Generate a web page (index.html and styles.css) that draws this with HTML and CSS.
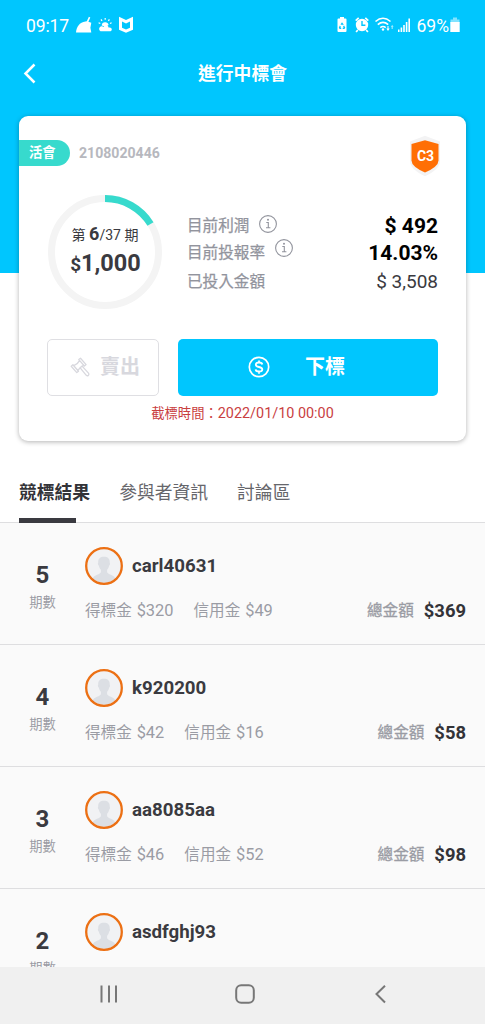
FILE: index.html
```html
<!DOCTYPE html>
<html lang="zh-Hant">
<head>
<meta charset="utf-8">
<meta name="viewport" content="width=device-width">
<title>進行中標會</title>
<link rel="stylesheet" href="styles.css">
</head>
<body>
<svg class="defs" width="0" height="0">
  <symbol id="info" viewBox="0 0 20 20"><circle cx="10" cy="10" r="8.4" fill="none" stroke="currentColor" stroke-width="1.1"/><path d="M8.300 8.500h2v5.200M8 13.800h4.400" fill="none" stroke="currentColor" stroke-width="1.1"/><circle cx="10" cy="5.800" r="1" fill="currentColor"/></symbol>
  <symbol id="avatar" viewBox="0 0 38 38"><circle cx="19" cy="19" r="17.8" fill="#f1f2f4"/><path d="M13.2 16c-.3-4 1.6-6.2 5.8-6.2s6 2.200 5.700 6.200c.6.400.3 2.200-.5 2.600-.4 2-1.100 3.200-2.100 4.200v2.200c0 2.600 7.500 2.500 8.100 6.600a17 17 0 0 1-22.400 0c.6-4.100 8.100-4 8.100-6.600v-2.200c-1-1-1.700-2.200-2.100-4.200-.9-.4-1.200-2.200-.6-2.600z" fill="#dcdfe4"/><circle cx="19" cy="19" r="17.800" fill="none" stroke="#ec7014" stroke-width="2.300"/></symbol>
</svg>
<div class="screen">
  <header class="hero">
    <div class="status">
      <span class="clock">09:17</span>
      <svg class="st-left" width="60" height="18" viewBox="0 0 60 18" fill="#fff">
        <path d="M0 16.500C.5 11 3.500 6 9.500 5.500l1.300-.2 2.100-4.500 1.400.7-1.900 4.200 2.900 1-.9 5.100.9 4.700z"/>
        <g transform="translate(22 2)"><path d="M2.500 13.200a2.600 2.600 0 0 1-.2-4.500c1.500-.8 2.500-.5 3.200.2 1.500-2.200 4.900-1.500 5.200.8 1.800-.5 3.100.6 3.100 1.700 0 1.100-.8 1.800-2 1.800z"/><path d="M3.700 7.400a3.500 3.500 0 0 1 6.900-.4l-1.400 1-3 .2z"/><path d="M7.200 0v1.800M3 1.300l1 1.500M11.400 1.300l-1 1.500M.6 4.800l1.700.7M13.600 4.800l-1.600.7" stroke="#fff" stroke-width="1.200"/></g>
        <path d="M43 .7l7 3.300 7-3.300v13l-7 3-7-3zm3 4.800v6.300l4 1.700 4-1.700V5.500l-4 2z" fill-rule="evenodd"/>
      </svg>
      <svg class="st-right" width="76" height="18" viewBox="0 0 76 18" fill="#fff">
        <path fill-rule="evenodd" d="M4 1h4v1.500h1.500q1 0 1 1V15q0 1-1 1h-7q-1 0-1-1V3.500q0-1 1-1H4zm2 5.200L4.500 8.500l1 .6.500-.8.700 1 1-.7zM3.800 9.500l-1 2.200.9 1.300h1.500v-1.300H4.400l.5-.9zm4.300 0-1 .7.500 1.500h-.9V13h1.700l.9-1.300z"/>
        <circle cx="26" cy="9" r="6.200"/><path d="M19.700 4.600l3-2.700M32.300 4.600l-3-2.700M21.800 14l-1.700 2M30.200 14l1.700 2" stroke="#fff" stroke-width="1.700"/><path d="M26 5v4.300h3.400" fill="none" stroke="#00c6fe" stroke-width="1.400"/>
        <path d="M39.500 5.500q7.500-6.500 15 0M41.800 8.700q5.200-4.500 10.400 0M44.300 11.600q2.700-2.200 5.400 0" fill="none" stroke="#fff" stroke-width="1.600"/><circle cx="47" cy="13.500" r="1.200"/><path d="M50.300 12.600h1.200V10h1v2.600h1.200l-1.700 2.500z"/><path opacity=".6" d="M54.800 11l1.400-2.200 1.400 2.200h-.8v2h-1.200v-2z"/>
        <path d="M62 13.500h1.500V16H62zM64.600 11.500h1.600V16h-1.600zM67.200 9h1.600v7h-1.600zM69.800 6h1.600v10h-1.600zM72.400 2.500H74V16h-1.600z"/>
      </svg>
      <span class="percent">69%</span>
      <svg width="10" height="16" viewBox="0 0 10 16" fill="#fff"><path d="M3 .5h4v2h2.500v3h-9v-3H3z" opacity=".5"/><path d="M.3 5h9.400v10H.3z"/></svg>
    </div>
    <div class="appbar">
      <svg class="back" width="14" height="22" viewBox="0 0 14 22"><path d="M11.500 1.500 2.500 10.500l9 9" fill="none" stroke="#fff" stroke-width="2.500"/></svg>
      <h1>進行中標會</h1>
    </div>
    <section class="card">
      <div class="card-top">
        <span class="tag">活會</span><span class="serial">2108020446</span>
        <svg class="shield" width="34" height="42" viewBox="0 0 34 42"><path d="M17 .8 32 6.500v19q0 9-15 15.700Q2 34.500 2 25.500v-19z" fill="#f3f3f4"/><path d="M17 5.200 30.500 9v16.500q0 6-13.500 12.100Q3.500 31.500 3.500 25.500V9z" fill="#ff6f05"/><text x="17.500" y="26" text-anchor="middle" class="grade">C3</text></svg>
      </div>
      <div class="summary">
        <div class="ring">
          <svg class="dial" width="114" height="114" viewBox="0 0 114 114"><circle cx="57" cy="57" r="53.500" fill="none" stroke="#f4f4f4" stroke-width="7"/><path d="M57 3.500A53.500 53.500 0 0 1 102.500 29" fill="none" stroke="#37dacd" stroke-width="7"/></svg>
          <div class="ring-text"><div class="period">第 <b>6</b>/37 期</div><div class="amount"><small>$</small>1,000</div></div>
        </div>
        <dl class="stats">
          <div class="stat"><dt>目前利潤<svg class="info"><use href="#info"/></svg></dt><dd>$ 492</dd></div>
          <div class="stat"><dt>目前投報率<svg class="info raised"><use href="#info"/></svg></dt><dd>14.03%</dd></div>
          <div class="stat last"><dt>已投入金額</dt><dd class="plain">$ 3,508</dd></div>
        </dl>
      </div>
      <div class="actions">
        <button class="btn sell"><svg width="20" height="21" viewBox="0 0 20 21" fill="none" stroke="currentColor" stroke-width="1.300" stroke-linejoin="round"><path d="m1.200 9.200 1.700-1.400 5.600 6.400-1.700 1.400zM8.800 2.600l1.700-1.400 5.600 6.400-1.700 1.400zM3.800 8.600q4-1.500 5.700-5M8 13.300q2.300-3.600 5.700-5M10.200 10.800l1.900-1.700 6.600 7.300q.5 1.200-.4 2-1 .8-2-.1z"/></svg><span>賣出</span></button>
        <button class="btn bid"><svg width="22" height="22" viewBox="0 0 22 22" fill="none" stroke="currentColor"><circle cx="11" cy="11" r="9.700" stroke-width="1.700"/><path d="M14.300 8.500Q14 6.500 11 6.500T7.800 8.700Q7.800 10.400 11 11t3.300 2.400q0 2.100-3.300 2.100t-3.400-2.100M11 4.400v2.100M11 15.500v2.200" stroke-width="1.800"/></svg><span>下標</span></button>
      </div>
      <p class="deadline">截標時間：<span>2022/01/10 00:00</span></p>
    </section>
  </header>
  <nav class="tabs"><a class="tab active">競標結果</a><a class="tab">參與者資訊</a><a class="tab">討論區</a></nav>
  <main class="list">
    <article class="row"><div class="no"><b>5</b><span>期數</span></div><div class="body"><div class="user"><svg class="avatar"><use href="#avatar"/></svg><span>carl40631</span></div><div class="meta"><span>得標金 <i>$320</i></span><span>信用金 <i>$49</i></span><span class="total">總金額<b>$369</b></span></div></div></article>
    <article class="row"><div class="no"><b>4</b><span>期數</span></div><div class="body"><div class="user"><svg class="avatar"><use href="#avatar"/></svg><span>k920200</span></div><div class="meta"><span>得標金 <i>$42</i></span><span>信用金 <i>$16</i></span><span class="total">總金額<b>$58</b></span></div></div></article>
    <article class="row"><div class="no"><b>3</b><span>期數</span></div><div class="body"><div class="user"><svg class="avatar"><use href="#avatar"/></svg><span>aa8085aa</span></div><div class="meta"><span>得標金 <i>$46</i></span><span>信用金 <i>$52</i></span><span class="total">總金額<b>$98</b></span></div></div></article>
    <article class="row"><div class="no"><b>2</b><span>期數</span></div><div class="body"><div class="user"><svg class="avatar"><use href="#avatar"/></svg><span>asdfghj93</span></div></div></article>
  </main>
  <footer class="sysnav">
    <svg width="20" height="20" viewBox="0 0 20 20"><path d="M2.500 1.500v17M10 1.500v17M17 1.500v17"/></svg>
    <svg width="20" height="20" viewBox="0 0 20 20"><rect x="1.200" y="1.200" width="17.600" height="17.600" rx="5"/></svg>
    <svg width="20" height="20" viewBox="0 0 20 20"><path d="M15 1.800 6.500 10l8.500 8.500"/></svg>
  </footer>
</div>
</body>
</html>
```
FILE: styles.css
```css
* { box-sizing: border-box; }
body { margin: 0; font-family: Roboto, "Noto Sans CJK TC", sans-serif; color: #3a3a40; background: #fff; }
h1, p, dl, dd { margin: 0; }
svg { flex: none; display: block; }
.defs { position: absolute; }
.screen { width: 485px; height: 1024px; display: flex; flex-direction: column; overflow: hidden; }

.hero { flex: none; height: 441px; background: linear-gradient(#00c6fe 273px, #fff 273px); }
.status { height: 50px; padding: 0 25px 0 26px; display: flex; align-items: center; color: #fff; font-size: 17.5px; line-height: 20px; }
.clock { width: 50px; padding-top: 1px; letter-spacing: -.1px; }
.st-right { margin-left: auto; }
.percent { margin: 0 1px 0 5px; padding-top: 1px; }
.appbar { height: 66px; padding: 13px 24px 0 23px; display: grid; grid-template-columns: 15px 1fr 14px; }
h1 { text-align: center; padding-top: 1px; font-size: 17.800px; line-height: 20px; color: #fff; font-weight: 700; }

.card { width: 447px; height: 325px; margin: 0 auto 0 19px; background: #fff; border-radius: 9px; box-shadow: 0 1px 5px rgba(0,0,0,.3); }
.card-top { height: 79px; padding: 0 24px 0 0; display: flex; }
.tag { margin-top: 23.500px; width: 51px; height: 26px; border-radius: 0 13px 13px 0; background: #37dacd; color: #fff; font-weight: 700; font-size: 13.300px; line-height: 26px; padding-left: 10px; }
.serial { margin: 24px 0 0 9px; color: #b7b8be; font-weight: 700; font-size: 14.100px; line-height: 27px; }
.shield { margin: 19px 0 0 auto; }
.grade { font: 700 14px Roboto, sans-serif; fill: #fff; }
.summary { height: 143.500px; padding: 0 28px 0 29px; display: flex; }
.ring { width: 114px; height: 114px; display: grid; }
.ring > * { grid-area: 1 / 1; }
.ring-text { text-align: center; padding-top: 26px; }
.period { font-size: 14px; line-height: 25px; height: 25px; white-space: nowrap; }
.period b { font-size: 18px; }
.amount { font-size: 23.500px; font-weight: 700; line-height: 34px; height: 34px; padding-left: 1px; }
.amount small { font-size: 19px; }
.stats { flex: 1; margin-left: 25px; padding-top: 17px; }
.stat { height: 27px; display: flex; justify-content: space-between; align-items: center; }
.stat.last { height: 31px; }
dt { display: flex; align-items: center; font-size: 15.600px; line-height: 26px; color: #92949d; -webkit-text-stroke: .25px; }
dd { font-size: 21px; font-weight: 700; color: #000; line-height: 26px; }
dd.plain { font-size: 19px; font-weight: 400; color: #3a3a40; }
.info { width: 20px; height: 20px; margin: -4px 0 0 9px; }
.info.raised { margin-top: -10px; }
.actions { height: 57px; margin: 0 28px; display: flex; gap: 19px; }
.btn { height: 57px; border: 0; border-radius: 5px; display: flex; align-items: center; font: 700 20px/28px Roboto, "Noto Sans CJK TC", sans-serif; }
.sell { width: 112px; padding: 0 0 0 22px; gap: 10px; background: #fff; border: 1px solid #dfdfe3; color: #d8d8de; }
.bid { width: 260px; padding: 0 0 0 70px; gap: 35px; background: #00c6fe; color: #fff; }
.deadline { text-align: center; color: #c9403f; font-size: 13.300px; line-height: 36px; }
.deadline span { font-size: 14.400px; }

.tabs { flex: none; height: 82px; padding: 30px 19px 0; display: flex; gap: 29px; border-bottom: 1px solid #dedee0; }
.tab { height: 52px; font-size: 17.800px; line-height: 44px; color: #66666b; background: no-repeat 0 100%; }
.tab.active { font-weight: 700; color: #333338; background-image: linear-gradient(#3a3a40, #3a3a40); background-size: 57px 5px; }

.list { height: 444px; overflow: hidden; background: #fafafa; }
.row { height: 122px; padding: 24px 19px 0 0; display: flex; border-bottom: 1px solid #dedee0; }
.no { width: 85px; padding-top: 14px; display: flex; flex-direction: column; align-items: center; }
.no b { font-size: 24px; line-height: 28px; }
.no span { font-size: 13.300px; line-height: 28px; color: #9a9ca4; }
.body { flex: 1; }
.user { display: flex; align-items: center; gap: 9px; height: 38px; font-size: 18.700px; font-weight: 700; }
.avatar { width: 38px; height: 38px; }
.meta { display: flex; gap: 20px; height: 24px; margin-top: 14px; font-size: 15.600px; line-height: 24px; color: #9a9ca4; }
.meta i { font-style: normal; font-size: 16.400px; margin-left: 1px; }
.total { margin-left: auto; display: flex; gap: 10px; -webkit-text-stroke: .3px; }
.total b { font-size: 18.400px; color: #333338; -webkit-text-stroke: 0; }

.sysnav { flex: none; height: 57px; background: #f0f0f0; padding: 17px 95px 0 99px; display: flex; justify-content: space-between; }
.sysnav svg { fill: none; stroke: #777; stroke-width: 2; }
```
